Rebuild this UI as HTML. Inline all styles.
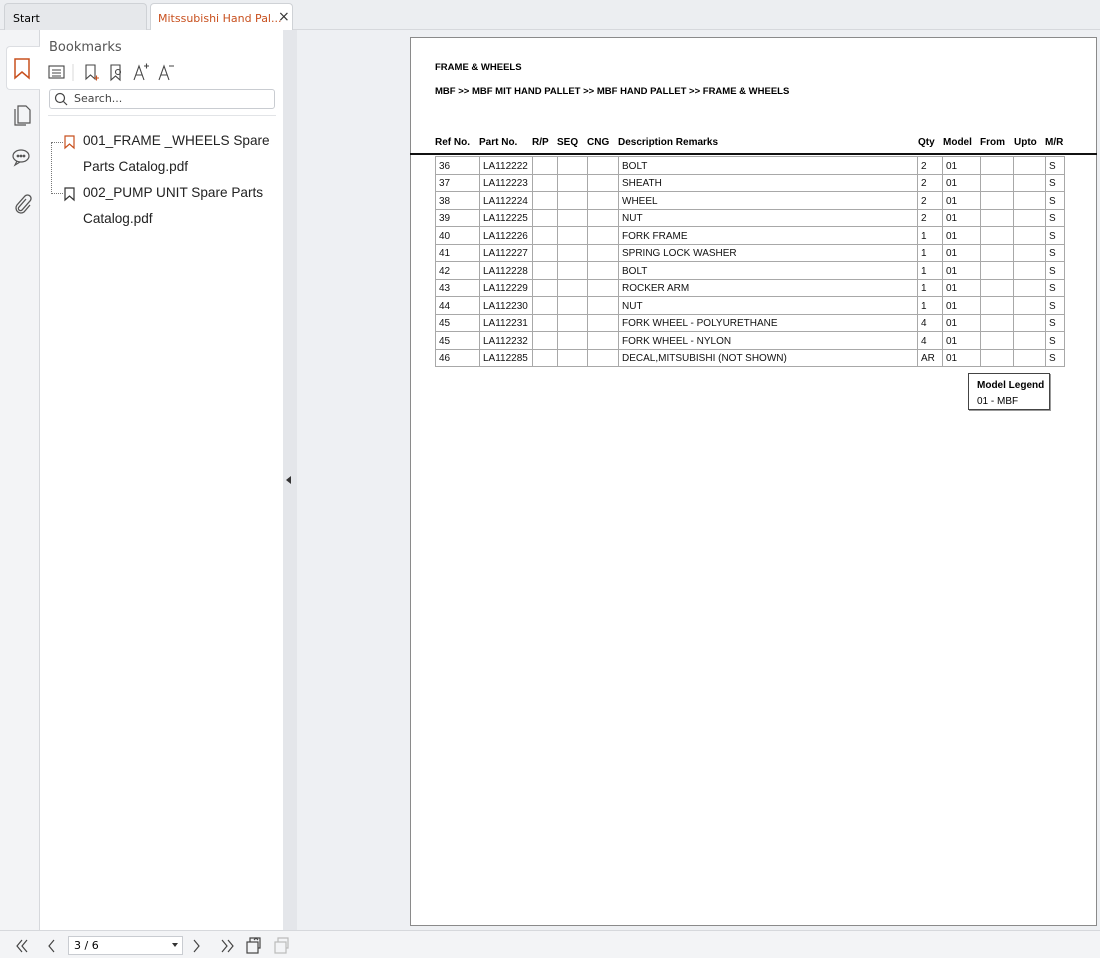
<!DOCTYPE html><html><head><style>
*{margin:0;padding:0;box-sizing:border-box}
body{width:1100px;height:958px;background:#f3f4f6;font-family:"Liberation Sans",sans-serif;position:relative;overflow:hidden}
.a{position:absolute}
.tab{font-size:12px;font-family:"DejaVu Sans","Liberation Sans",sans-serif}
table{border-collapse:collapse;position:absolute;left:435px;top:156px;font-size:10px}
td{border:1px solid #a8a8a8;height:17.5px;padding:2px 0 0 3px;white-space:nowrap;color:#111}
.h{font-size:10px;font-weight:bold;top:137px}
</style></head><body>
<div class="a" style="left:0;top:0;width:1100px;height:30px;background:#eceef1;border-bottom:1px solid #d6d8dc"></div>
<div class="a tab" style="left:4px;top:3px;width:143px;height:27px;border:1px solid #cfd2d6;border-bottom:none;border-radius:4px 4px 0 0;background:#e6e8eb;padding:8px 0 0 8px;font-size:11px">Start</div>
<div class="a tab" style="left:150px;top:3px;width:143px;height:28px;border:1px solid #cfd2d6;border-bottom:none;border-radius:4px 4px 0 0;background:#fff;padding:8px 0 0 7px;color:#c8501e;font-size:11px">Mitssubishi Hand Pal... <span style="color:#333;position:absolute;left:127px;top:5px;font-size:14px">×</span></div>
<div class="a" style="left:0;top:30px;width:40px;height:900px;background:#f3f4f6;border-right:1px solid #d6d8dc"></div>
<div class="a" style="left:6px;top:46px;width:35px;height:44px;background:#fff;border:1px solid #dcdee2;border-right:none;border-radius:4px 0 0 4px"></div>
<svg class="a" style="left:12px;top:57px" width="20" height="24"><path d="M3 2h14v19l-7-6-7 6z" fill="none" stroke="#c8501e" stroke-width="1.5"/></svg>
<svg class="a" style="left:12px;top:102px" width="20" height="24" fill="none" stroke="#555" stroke-width="1.2"><path d="M6 4h8l4 4v13H6z"/><path d="M3 7v16h11"/></svg>
<svg class="a" style="left:11px;top:147px" width="22" height="20" fill="none" stroke="#555" stroke-width="1.2"><ellipse cx="10" cy="9" rx="8" ry="6"/><path d="M6 14l-2 4 5-3"/><circle cx="7" cy="9" r=".8" fill="#555"/><circle cx="10" cy="9" r=".8" fill="#555"/><circle cx="13" cy="9" r=".8" fill="#555"/></svg>
<svg class="a" style="left:12px;top:193px" width="20" height="22" fill="none" stroke="#555" stroke-width="1.3"><path d="M14 6l-7 8a2 2 0 0 0 3 3l8-9a3.5 3.5 0 0 0-5-5l-8 9a5 5 0 0 0 7 7l6-7"/></svg>
<div class="a" style="left:40px;top:30px;width:243px;height:900px;background:#fff"></div>
<div class="a" style="left:283px;top:30px;width:14px;height:900px;background:#e4e6ea"></div>
<div class="a" style="left:286px;top:476px;width:0;height:0;border:4px solid transparent;border-right:5px solid #333;border-left:none"></div>
<div class="a tab" style="left:49px;top:40px;color:#555;font-size:13px">Bookmarks</div>
<svg class="a" style="left:47px;top:62px" width="135" height="22" fill="none" stroke="#444" stroke-width="1.1"><rect x="2" y="4" width="15" height="12"/><path d="M5 8h9M5 11h9M5 14h9"/><path d="M26 2v17" stroke="#ddd"/><path d="M39 3h9v14l-4.5-4-4.5 4z"/><path d="M47 16h5M49.5 13.5v5" stroke="#c8501e"/><path d="M64 3h9v15l-4.5-4-4.5 4z"/><circle cx="71" cy="10" r="2.5"/><path d="M87 18l5-14 5 14M89 13h6M97 4h5M99.5 1.5v5"/><path d="M112 18l5-14 5 14M114 13h6M122 4h5"/></svg>
<div class="a" style="left:49px;top:89px;width:226px;height:20px;border:1px solid #c9ccd1;border-radius:3px"></div>
<svg class="a" style="left:54px;top:92px" width="14" height="14" fill="none" stroke="#444" stroke-width="1.2"><circle cx="6" cy="6" r="4.5"/><path d="M9.5 9.5L13 13"/></svg>
<div class="a tab" style="left:74px;top:92px;font-size:11px;color:#444">Search...</div>
<div class="a" style="left:48px;top:115px;width:228px;border-top:1px solid #e2e4e7"></div>
<div class="a" style="left:51px;top:142px;width:12px;height:52px;border-left:1px dotted #777;border-top:1px dotted #777;border-bottom:1px dotted #777"></div>
<svg class="a" style="left:64px;top:135px" width="12" height="15"><path d="M1 1h9v12l-4.5-4L1 13z" fill="none" stroke="#c8501e" stroke-width="1.2"/></svg>
<svg class="a" style="left:64px;top:187px" width="12" height="15"><path d="M1 1h9v12l-4.5-4L1 13z" fill="none" stroke="#333" stroke-width="1.2"/></svg>
<div class="a" style="left:83px;top:128px;font-family:'Liberation Sans',sans-serif;font-size:13.6px;line-height:26px;color:#222;white-space:nowrap">001_FRAME _WHEELS Spare<br>Parts Catalog.pdf<br>002_PUMP UNIT Spare Parts<br>Catalog.pdf</div>
<div class="a" style="left:297px;top:30px;width:803px;height:900px;background:#eef0f3"></div>
<div class="a" style="left:410px;top:37px;width:687px;height:889px;background:#fff;border:1px solid #8a8a8a"></div>
<div class="a" style="left:435px;top:62px;font-size:9.5px;font-weight:bold">FRAME &amp; WHEELS</div>
<div class="a" style="left:435px;top:86px;font-size:9.5px;font-weight:bold">MBF &gt;&gt; MBF MIT HAND PALLET &gt;&gt; MBF HAND PALLET &gt;&gt; FRAME &amp; WHEELS</div>
<div class="a h" style="left:435px">Ref No.</div><div class="a h" style="left:479px">Part No.</div><div class="a h" style="left:532px">R/P</div><div class="a h" style="left:557px">SEQ</div><div class="a h" style="left:587px">CNG</div><div class="a h" style="left:618px">Description Remarks</div><div class="a h" style="left:918px">Qty</div><div class="a h" style="left:943px">Model</div><div class="a h" style="left:980px">From</div><div class="a h" style="left:1014px">Upto</div><div class="a h" style="left:1045px">M/R</div>
<div class="a" style="left:410px;top:153px;width:687px;border-top:2px solid #111"></div>
<table>
<colgroup><col style="width:44px"><col style="width:53px"><col style="width:25px"><col style="width:30px"><col style="width:31px"><col style="width:299px"><col style="width:25px"><col style="width:38px"><col style="width:33px"><col style="width:32px"><col style="width:19px"></colgroup>
<tr><td>36</td><td>LA112222</td><td></td><td></td><td></td><td>BOLT</td><td>2</td><td>01</td><td></td><td></td><td>S</td></tr>
<tr><td>37</td><td>LA112223</td><td></td><td></td><td></td><td>SHEATH</td><td>2</td><td>01</td><td></td><td></td><td>S</td></tr>
<tr><td>38</td><td>LA112224</td><td></td><td></td><td></td><td>WHEEL</td><td>2</td><td>01</td><td></td><td></td><td>S</td></tr>
<tr><td>39</td><td>LA112225</td><td></td><td></td><td></td><td>NUT</td><td>2</td><td>01</td><td></td><td></td><td>S</td></tr>
<tr><td>40</td><td>LA112226</td><td></td><td></td><td></td><td>FORK FRAME</td><td>1</td><td>01</td><td></td><td></td><td>S</td></tr>
<tr><td>41</td><td>LA112227</td><td></td><td></td><td></td><td>SPRING LOCK WASHER</td><td>1</td><td>01</td><td></td><td></td><td>S</td></tr>
<tr><td>42</td><td>LA112228</td><td></td><td></td><td></td><td>BOLT</td><td>1</td><td>01</td><td></td><td></td><td>S</td></tr>
<tr><td>43</td><td>LA112229</td><td></td><td></td><td></td><td>ROCKER ARM</td><td>1</td><td>01</td><td></td><td></td><td>S</td></tr>
<tr><td>44</td><td>LA112230</td><td></td><td></td><td></td><td>NUT</td><td>1</td><td>01</td><td></td><td></td><td>S</td></tr>
<tr><td>45</td><td>LA112231</td><td></td><td></td><td></td><td>FORK WHEEL - POLYURETHANE</td><td>4</td><td>01</td><td></td><td></td><td>S</td></tr>
<tr><td>45</td><td>LA112232</td><td></td><td></td><td></td><td>FORK WHEEL - NYLON</td><td>4</td><td>01</td><td></td><td></td><td>S</td></tr>
<tr><td>46</td><td>LA112285</td><td></td><td></td><td></td><td>DECAL,MITSUBISHI (NOT SHOWN)</td><td>AR</td><td>01</td><td></td><td></td><td>S</td></tr>
</table>
<div class="a" style="left:968px;top:373px;width:82px;height:37px;border:1px solid #444;box-shadow:1px 1px 0 #999;font-size:10px;padding:4px 0 0 8px;line-height:16px"><b>Model Legend</b><br>01 - MBF</div>
<div class="a" style="left:0;top:930px;width:1100px;height:28px;background:#f3f4f6;border-top:1px solid #d6d8dc"></div>
<svg class="a" style="left:14px;top:937px" width="280" height="18" fill="none" stroke="#444" stroke-width="1.2"><path d="M8 3l-5 6 5 6M13 3l-5 6 5 6M40 3l-5 6 5 6M180 3l5 6-5 6M208 3l5 6-5 6M214 3l5 6-5 6"/><rect x="233" y="5" width="11" height="11"/><path d="M236 5V1h10v10h-2M240 3l2-2 2 2"/><g stroke="#bbb"><rect x="261" y="5" width="11" height="11"/><path d="M264 5V1h10v10h-2"/></g></svg>
<div class="a" style="left:68px;top:936px;width:115px;height:19px;background:#fff;border:1px solid #c9ccd1;font-size:11px;padding:2px 0 0 5px;font-family:'DejaVu Sans',sans-serif">3 / 6<span style="position:absolute;right:4px;top:6px;border:3.5px solid transparent;border-top:4px solid #333"></span></div>
</body></html>
